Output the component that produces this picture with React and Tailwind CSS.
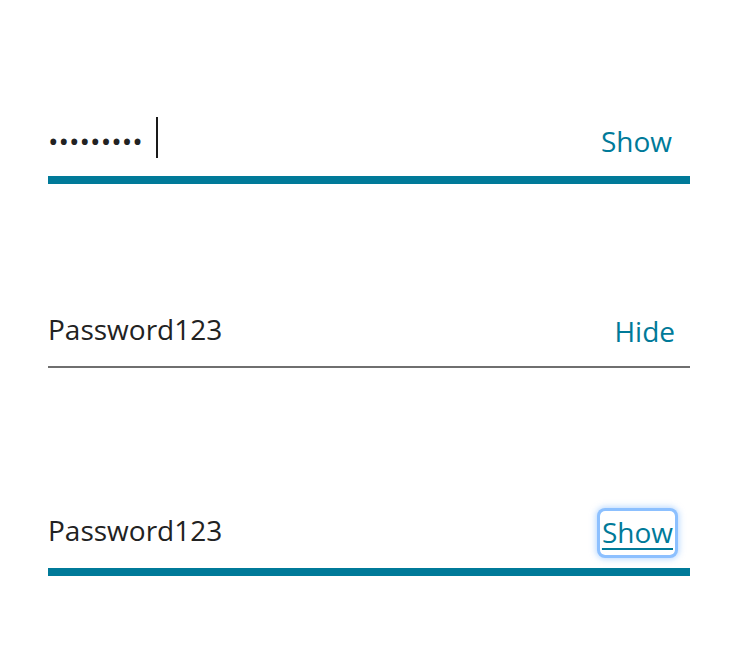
import React from 'react';

const font = { fontFamily: '"Open Sans", "Liberation Sans", sans-serif' };

function Field({ value, caret, action, focused, line, className, actionClass }) {
  const thick = line === 'thick';
  return (
    <div
      className={`flex items-end justify-between ${thick ? 'border-b-[8px] border-[#007a99]' : 'border-b-2 border-[#6f6f6f]'} ${className}`}
    >
      <div className="flex items-center h-[38px] text-[28px] leading-[38px] text-[#222222]">
        <span>{value}</span>
        {caret && <span className="ml-[13px] mb-[7px] w-[2px] h-[41px] bg-[#1a1a1a]" />}
      </div>
      <button
        className={`text-[28px] leading-[38px] text-[#007a99] ${actionClass} ${focused ? 'underline underline-offset-[5px] decoration-2 rounded-[5px] px-[2px] pt-[2px] pb-[4px] -mb-[6px] shadow-[0_0_0_3px_#8cc0ff,0_0_6px_4px_rgba(140,192,255,0.65)]' : ''}`}
        style={font}
      >
        {action}
      </button>
    </div>
  );
}

export default function App() {
  return (
    <div className="w-[740px] h-[670px] bg-white px-[48px] pr-[50px]" style={font}>
      <div className="pt-[122px]">
        <Field value="•••••••••" caret action="Show" line="thick" className="pb-[16px]" actionClass="mr-[18px]" />
      </div>
      <Field value="Password123" action="Hide" line="thin" className="mt-[126px] pb-[18px]" actionClass="mr-[15px] -mb-[2px]" />
      <Field value="Password123" action="Show" focused line="thick" className="mt-[143px] pb-[19px]" actionClass="mr-[15px]" />
    </div>
  );
}
